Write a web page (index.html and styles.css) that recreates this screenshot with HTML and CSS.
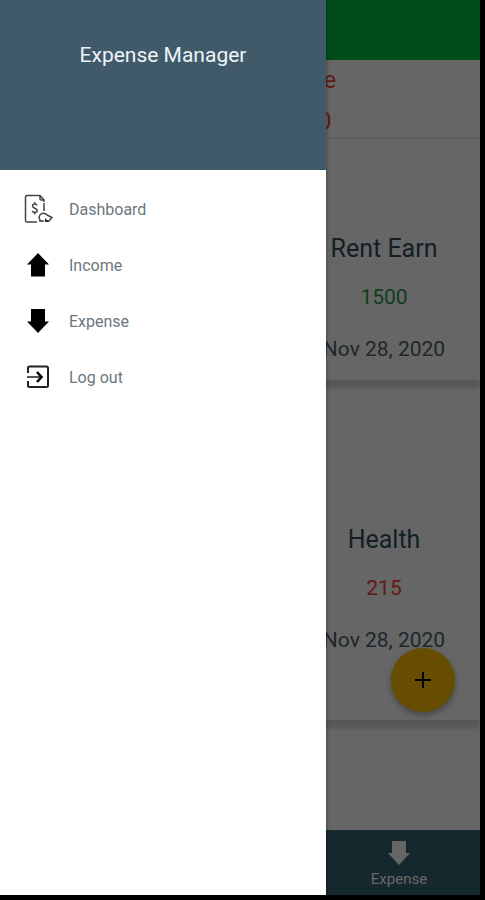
FILE: index.html
```html
<!DOCTYPE html>
<html lang="en">
<head>
<meta charset="utf-8">
<meta name="viewport" content="width=device-width, initial-scale=1">
<title>Expense Manager</title>
<link rel="stylesheet" href="styles.css">
</head>
<body>
<div class="phone">
  <main class="screen">
    <header class="appbar"></header>
    <section class="summary">
      <div class="summary-label">Expense</div>
      <div class="summary-value">0</div>
    </section>
    <section class="list">
      <article class="card">
        <h2>Rent Earn</h2>
        <p class="amount income">1500</p>
        <p class="date">Nov 28, 2020</p>
      </article>
      <article class="card card-tall">
        <h2>Health</h2>
        <p class="amount expense">215</p>
        <p class="date">Nov 28, 2020</p>
      </article>
    </section>
    <nav class="tabs">
      <a class="tab" href="#">
        <svg width="24" height="26" viewBox="0 0 24 26" aria-hidden="true"><path fill="currentColor" d="M5 1h14v12h4L12 25 1 13h4z"/></svg>
        <span>Expense</span>
      </a>
    </nav>
    <button class="fab" type="button" aria-label="Add">
      <svg width="18" height="18" viewBox="0 0 18 18" aria-hidden="true"><path stroke="#000" stroke-width="2" d="M9 1v16M1 9h16"/></svg>
    </button>
    <div class="scrim"></div>
  </main>
  <aside class="drawer">
    <header class="drawer-head"><h1>Expense Manager</h1></header>
    <nav class="menu">
      <a href="#">
        <svg width="32" height="32" viewBox="0 0 32 32" fill="none" stroke="#444" stroke-width="1.5" aria-hidden="true">
          <path d="M15 29H5q-1.500 0-1.500-1.500V4Q3.500 2.500 5 2.500h13l4 4.500v2M18 2.500V6q0 1 1 1h3M22 10v8"/>
          <path d="M15 12.500q-.5-1.500-2.300-1.500-2.200 0-2.200 2 0 1.500 2.300 2.200 2.400.7 2.400 2.300 0 2-2.400 2-2.200 0-2.600-1.700M12.700 9v2M12.700 19.500v2"/>
          <path d="M20 28.500a4.300 4.300 0 1 1 5-6.500M17 28h5M25 22l5 2.500-3 3.500h-2"/>
          <path d="M23 29v-4l4 4z" fill="#222" stroke="none"/>
        </svg>
        <span>Dashboard</span>
      </a>
      <a href="#">
        <svg width="32" height="32" viewBox="0 0 32 32" aria-hidden="true"><path d="M16 4l11 11.500h-4v12H9v-12H5z"/></svg>
        <span>Income</span>
      </a>
      <a href="#">
        <svg width="32" height="32" viewBox="0 0 32 32" aria-hidden="true"><path d="M9 4h14v12.500h4L16 28 5 16.500h4z"/></svg>
        <span>Expense</span>
      </a>
      <a href="#">
        <svg width="32" height="32" viewBox="0 0 32 32" fill="none" stroke="#222" stroke-width="2" aria-hidden="true">
          <path d="M6 12V7q0-1.500 1.500-1.500h17Q26 5.500 26 7v17.500q0 1.500-1.500 1.500h-17Q6 26 6 24.500V20"/>
          <path d="M5 16h14" stroke="#555"/>
          <path d="M15 11l4.500 5-4.500 5" stroke="#000" stroke-width="2.600"/>
        </svg>
        <span>Log out</span>
      </a>
    </nav>
  </aside>
</div>
</body>
</html>
```
FILE: styles.css
```css
* { box-sizing: border-box; }

body {
  margin: 0;
  background: #000;
  font-family: Roboto, "Liberation Sans", sans-serif;
}

h1, h2, p { margin: 0; font-weight: 400; }
a { color: inherit; text-decoration: none; }

.phone {
  position: relative;
  height: 100vh;
  padding: 0 5px 5px 0;
}

.screen {
  position: relative;
  display: flex;
  flex-direction: column;
  height: 100%;
  overflow: hidden;
  background: #fff;
}

.appbar { height: 60px; background: #00c041; }

.summary {
  height: 79px;
  padding-left: 246px;
  color: #f44336;
  font-size: 24px;
  line-height: 42px;
  border-bottom: 2px solid #ececec;
}
.summary-label { line-height: 40px; }
.summary-value { margin-left: 72px; }

.list { flex: 1; }

.card {
  height: 166px;
  margin-top: 75px;
  padding: 17px 16px 0 0;
  display: flex;
  flex-direction: column;
  align-items: flex-end;
  box-shadow: 0 8px 4px #dadada;
}
.card-tall { height: 215px; margin-top: 125px; }
.card > * { width: 160px; text-align: center; white-space: nowrap; }
.card h2 { font-size: 25px; line-height: 36px; color: #2d5260; }
.amount { margin-top: 16px; font-size: 21px; line-height: 28px; }
.date { margin-top: 24px; font-size: 21px; line-height: 28px; color: #4e626b; }
.income { color: #1f9d4d; }
.expense { color: #f44336; }

.tabs {
  display: flex;
  justify-content: flex-end;
  height: 65px;
  background: #346473;
}
.tab {
  display: flex;
  flex-direction: column;
  align-items: center;
  width: 162px;
  padding-top: 10px;
  color: #fff;
  font-size: 15px;
  line-height: 26px;
}

.fab {
  position: absolute;
  right: 25px;
  bottom: 183px;
  display: flex;
  align-items: center;
  justify-content: center;
  width: 64px;
  height: 64px;
  padding: 0;
  border: 0;
  border-radius: 50%;
  background: #ffc107;
  box-shadow: 0 3px 6px #aaa;
}

.scrim {
  position: absolute;
  inset: 0;
  background: rgba(0, 0, 0, .6);
}

.drawer {
  position: absolute;
  top: 0;
  left: 0;
  bottom: 5px;
  width: 326px;
  background: #fff;
  box-shadow: 0 0 4px rgba(0, 0, 0, .4);
}

.drawer-head {
  height: 170px;
  padding-top: 40px;
  background: #405a6a;
  color: #eef4f8;
  text-align: center;
}
.drawer-head h1 { font-size: 21px; line-height: 30px; }

.menu { padding-top: 11px; }
.menu a {
  display: flex;
  align-items: center;
  gap: 15px;
  height: 56px;
  padding-left: 22px;
  color: #6c777e;
  font-size: 16px;
}
```
